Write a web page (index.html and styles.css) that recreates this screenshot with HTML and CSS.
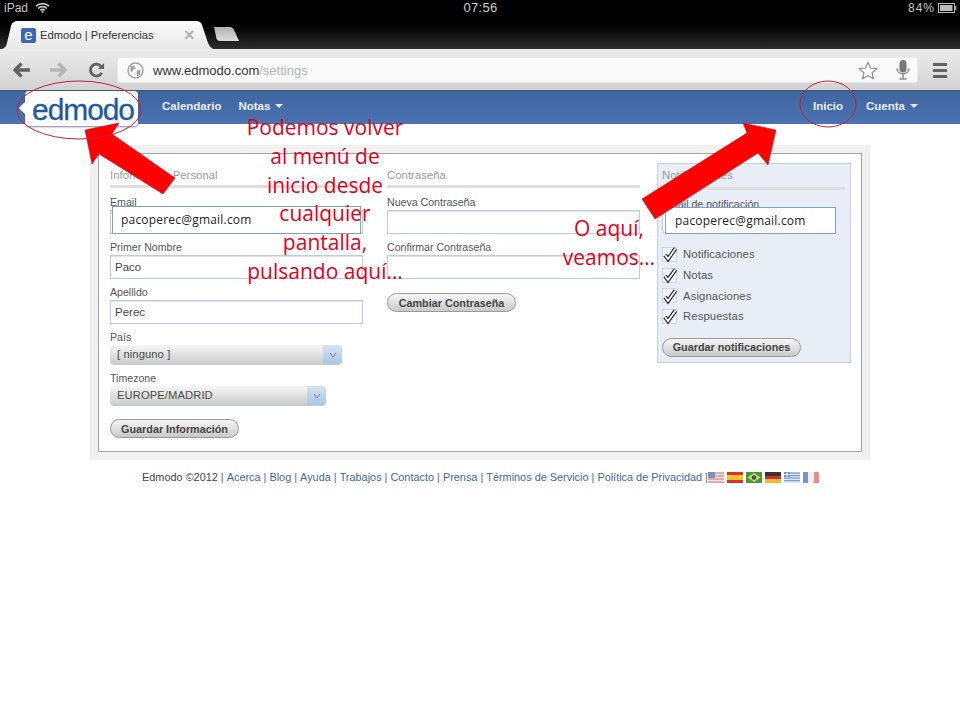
FILE: index.html
```html
<!DOCTYPE html>
<html lang="es">
<head>
<meta charset="utf-8">
<title>Edmodo | Preferencias</title>
<link rel="stylesheet" href="styles.css">
</head>
<body>
<div class="screen">
  <div class="status">
    <div class="status-left">
      <span>iPad</span>
      <svg class="wifi" width="15" height="11" viewBox="0 0 15 11"><path d="M1 4.200C4.600 .8 10.400 .8 14 4.200M3.200 6.300C5.600 4.100 9.400 4.100 11.800 6.300M5.300 8.300C6.500 7.200 8.500 7.200 9.700 8.300" fill="none" stroke="#ccc" stroke-width="1.600"/><path d="M7.500 8.700l1.500 1.400-1.500 .9-1.500-.9z" fill="#ccc"/></svg>
    </div>
    <div class="clock">07:56</div>
    <div class="status-right">
      <span>84%</span>
      <svg width="19" height="10" viewBox="0 0 19 10"><rect x=".5" y=".5" width="16" height="9" fill="none" stroke="#bbb"/><rect x="2" y="2" width="12.500" height="6" fill="#bbb"/><rect x="17" y="3" width="1.500" height="4" fill="#999"/></svg>
    </div>
  </div>

  <div class="tabstrip">
    <div class="tab">
      <svg class="tab-shape" width="214" height="28" viewBox="0 0 214 28"><defs><linearGradient id="tabfill" x1="0" y1="0" x2="0" y2="1"><stop offset="0" stop-color="#fbfbfb"/><stop offset="1" stop-color="#e8e8e8"/></linearGradient></defs><path d="M0 28C4 28 6 26 7 22L11 5C12 2 14 0 18 0H196C199 0 201 1 202 4L208 22C210 26 212 28 214 28Z" fill="url(#tabfill)"/></svg>
      <span class="favicon">e</span>
      <span class="tab-title">Edmodo | Preferencias</span>
      <span class="tab-close">×</span>
    </div>
    <svg class="newtab" width="28" height="15" viewBox="0 0 28 15"><defs><linearGradient id="newfill" x1="0" y1="0" x2="0" y2="1"><stop offset="0" stop-color="#b0b0b0"/><stop offset="1" stop-color="#dcdcdc"/></linearGradient></defs><path d="M2 0H18C20 0 21 1 22 3L27 14H8C6 14 5 13 4.500 11.500Z" fill="url(#newfill)"/></svg>
  </div>

  <div class="toolbar">
    <svg class="tool back" width="18" height="16" viewBox="0 0 18 16"><path d="M18 8H4M9.500 1.500L3 8L9.500 14.500" fill="none" stroke="#616161" stroke-width="3.400"/></svg>
    <svg class="tool fwd" width="18" height="16" viewBox="0 0 18 16"><path d="M0 8H14M8.500 1.500L15 8L8.500 14.500" fill="none" stroke="#b5b5b5" stroke-width="3.400"/></svg>
    <svg class="tool reload" width="17" height="17" viewBox="0 0 18 18"><path d="M14.500 11.500A6.300 6.300 0 1 1 13.800 4.600" fill="none" stroke="#616161" stroke-width="3"/><path d="M10.500 7.500H17V1Z" fill="#616161"/></svg>
    <div class="omnibox">
      <svg class="globe" width="17" height="17" viewBox="0 0 17 17"><circle cx="8.500" cy="8.500" r="7.500" fill="#fff" stroke="#a3a3a3" stroke-width="1.500"/><path d="M4 3.500l4 1 .5 2-2.500 1.500-1 3-2-3zM10 8l4 .5-1 4-2.500 2-1-3z" fill="#a3a3a3"/></svg>
      <span class="url"><span class="url-host">www.edmodo.com</span>/settings</span>
      <svg class="star" width="20" height="19" viewBox="0 0 20 19"><path d="M10 1.500l2.500 5.500 6 .7-4.400 4 1.200 5.900L10 14.700l-5.300 2.900 1.200-5.900-4.400-4 6-.7z" fill="#fff" stroke="#8f8f8f" stroke-width="1.200"/></svg>
      <svg class="mic" width="14" height="20" viewBox="0 0 14 20"><rect x="3.500" y="0" width="7" height="12.500" rx="3.500" fill="#777"/><path d="M1 8.500c0 7 12 7 12 0M7 14.500v3.500M3.500 19h7" fill="none" stroke="#888" stroke-width="1.500"/></svg>
    </div>
    <div class="menu-icon"><i></i><i></i><i></i></div>
  </div>

  <nav class="nav">
    <div class="logo"><span>edmodo</span></div>
    <a class="nav-link first">Calendario</a>
    <a class="nav-link">Notas<b class="caret"></b></a>
    <div class="nav-spacer"></div>
    <a class="nav-link">Inicio</a>
    <a class="nav-link last">Cuenta<b class="caret"></b></a>
  </nav>

  <main class="page">
    <div class="panel">
      <div class="card">
        <section class="col">
          <h2 class="heading">Información Personal</h2>
          <label class="label">Email</label>
          <div class="input"></div>
          <label class="label">Primer Nombre</label>
          <div class="input">Paco</div>
          <label class="label">Apellido</label>
          <div class="input">Perec</div>
          <label class="label">País</label>
          <div class="select pais">[ ninguno ]<span class="select-btn"><svg width="8" height="6" viewBox="0 0 8 6"><path d="M1 1l3 4 3-4" fill="none" stroke="#6d7f93"/></svg></span></div>
          <label class="label tz">Timezone</label>
          <div class="select zone">EUROPE/MADRID<span class="select-btn"><svg width="8" height="6" viewBox="0 0 8 6"><path d="M1 1l3 4 3-4" fill="none" stroke="#6d7f93"/></svg></span></div>
          <button class="btn save-info">Guardar Información</button>
        </section>
        <section class="col">
          <h2 class="heading">Contraseña</h2>
          <label class="label">Nueva Contraseña</label>
          <div class="input"></div>
          <label class="label">Confirmar Contraseña</label>
          <div class="input"></div>
          <button class="btn save-pass">Cambiar Contraseña</button>
        </section>
        <section class="notif">
          <h2 class="heading">Notificaciones</h2>
          <label class="label">Email de notificación</label>
          <div class="input notif-input"></div>
          <ul class="checks">
            <li><span class="box"><svg class="tick" width="16" height="16" viewBox="0 0 16 16"><path class="tick-out" d="M3 9l3 4L13.500 2.500"/><path class="tick-in" d="M3 9l3 4L13.500 2.500"/></svg></span>Notificaciones</li>
            <li><span class="box"><svg class="tick" width="16" height="16" viewBox="0 0 16 16"><path class="tick-out" d="M3 9l3 4L13.500 2.500"/><path class="tick-in" d="M3 9l3 4L13.500 2.500"/></svg></span>Notas</li>
            <li><span class="box"><svg class="tick" width="16" height="16" viewBox="0 0 16 16"><path class="tick-out" d="M3 9l3 4L13.500 2.500"/><path class="tick-in" d="M3 9l3 4L13.500 2.500"/></svg></span>Asignaciones</li>
            <li><span class="box"><svg class="tick" width="16" height="16" viewBox="0 0 16 16"><path class="tick-out" d="M3 9l3 4L13.500 2.500"/><path class="tick-in" d="M3 9l3 4L13.500 2.500"/></svg></span>Respuestas</li>
          </ul>
          <button class="btn save-notif">Guardar notificaciones</button>
        </section>
      </div>
    </div>
    <footer class="footer">
      <span class="copy">Edmodo ©2012</span><i>|</i><a>Acerca</a><i>|</i><a>Blog</a><i>|</i><a>Ayuda</a><i>|</i><a>Trabajos</a><i>|</i><a>Contacto</a><i>|</i><a>Prensa</a><i>|</i><a>Términos de Servicio</a><i>|</i><a>Política de Privacidad</a><i>|</i>
      <span class="flags">
        <svg width="16" height="11" viewBox="0 0 16 11"><rect width="16" height="11" fill="#e8a9ad"/><path d="M0 2.500h16M0 5.500h16M0 8.500h16" stroke="#f3eeee" stroke-width="1.200"/><rect width="7" height="6" fill="#7d8fc0"/></svg>
        <svg width="16" height="11" viewBox="0 0 16 11"><rect width="16" height="11" fill="#d8322a"/><rect y="3" width="16" height="5" fill="#f4c52e"/></svg>
        <svg width="16" height="11" viewBox="0 0 16 11"><rect width="16" height="11" fill="#3f9a45"/><path d="M8 1l6.500 4.500L8 10 1.500 5.500z" fill="#e6d43a"/><circle cx="8" cy="5.500" r="2.300" fill="#33508f"/></svg>
        <svg width="16" height="11" viewBox="0 0 16 11"><rect width="16" height="4" fill="#3b3330"/><rect y="4" width="16" height="3.500" fill="#c9352d"/><rect y="7.500" width="16" height="3.500" fill="#eebc33"/></svg>
        <svg width="16" height="11" viewBox="0 0 16 11"><rect width="16" height="11" fill="#dfe7f4"/><path d="M0 1.200h16M0 3.700h16M0 6.200h16M0 8.700h16" stroke="#7f9bd0" stroke-width="1.200"/><rect width="6" height="5" fill="#6f8fcb"/><path d="M3 0v5M0 2.500h6" stroke="#eef" stroke-width="1"/></svg>
        <svg width="16" height="11" viewBox="0 0 16 11"><rect width="16" height="11" fill="#f0eeee"/><rect width="5" height="11" fill="#7b95cc"/><rect x="11" width="5" height="11" fill="#e58f8c"/></svg>
      </span>
    </footer>
  </main>

  <div class="overlay-input email-over">pacoperec@gmail.com</div>
  <div class="overlay-input notif-over">pacoperec@gmail.com</div>

  <svg class="marks" width="960" height="720" viewBox="0 0 960 720">
    <polygon points="85,130 119,123 112,134 175,178 163,194 99,154 92,164" fill="#ff0000" stroke="#a8202c" stroke-width=".6"/>
    <polygon points="776,130 768,165 758,153 655,219 642,199 747,133 743,123" fill="#ff0000" stroke="#a8202c" stroke-width=".6"/>
    <ellipse cx="79" cy="110" rx="62" ry="29" fill="none" stroke="#c41e3a"/>
    <ellipse cx="828" cy="104" rx="28" ry="23" fill="none" stroke="#c41e3a"/>
  </svg>

  <div class="note note-left">Podemos volver<br>al menú de<br>inicio desde<br>cualquier<br>pantalla,<br>pulsando aquí…</div>
  <div class="note note-right">O aquí,<br>veamos…</div>
</div>
</body>
</html>
```
FILE: styles.css
```css
* { box-sizing: border-box; }
html, body { margin: 0; padding: 0; background: #fff; }
.screen {
  position: relative;
  width: 960px;
  height: 720px;
  overflow: hidden;
  font-family: "Liberation Sans", Arial, sans-serif;
  background: #fff;
}

/* iPad status bar */
.status {
  height: 15px;
  background: #000;
  color: #c8c8c8;
  font-size: 12px;
  display: flex;
  align-items: center;
  justify-content: space-between;
  padding: 0 3px 0 4px;
  position: relative;
}
.status-left { display: flex; align-items: center; gap: 7px; width: 200px; }
.clock { font-size: 13px; color: #d0d0d0; letter-spacing: .3px; }
.status-right { display: flex; align-items: center; justify-content: flex-end; gap: 3px; width: 200px; letter-spacing: 1px; }

/* browser chrome */
.tabstrip {
  height: 34px;
  background: linear-gradient(#000 0, #000 10px, #2e2e2e 100%);
  position: relative;
  display: flex;
  align-items: flex-end;
}
.tab {
  position: relative;
  width: 214px;
  height: 28px;
  display: flex;
  align-items: center;
  padding-left: 21px;
  font-size: 11.2px;
  color: #333;
}
.tab-shape { position: absolute; left: 0; top: 0; }
.favicon {
  position: relative;
  flex: none;
  width: 15px;
  height: 15px;
  background: #3a67b8;
  border-radius: 2px;
  color: #fff;
  font-size: 15px;
  line-height: 13px;
  text-align: center;
  margin-right: 4px;
}
.tab-title { position: relative; flex: none; width: 144px; white-space: nowrap; }
.tab-close { position: relative; font-size: 18px; color: #b5b5b5; line-height: 14px; font-weight: bold; }
.newtab { margin: 0 0 7px -2px; }
.toolbar {
  height: 41px;
  background: linear-gradient(#ebebeb, #d2d2d2);
  display: flex;
  align-items: center;
  padding: 1px 0 0 12px;
  position: relative;
}
.tool { flex: none; }
.back { margin-right: 20px; }
.fwd { margin-right: 20px; }
.reload { margin-right: 12px; }
.omnibox {
  flex: none;
  width: 801px;
  height: 26px;
  background: #fafafa;
  border-radius: 3px;
  border: 1px solid #e8e8e8;
  display: flex;
  align-items: center;
  padding: 0 7px 0 9px;
  font-size: 13px;
  color: #b3b3b3;
}
.globe { margin-right: 9px; }
.url { flex: 1; }
.url-host { color: #333; }
.star { margin-right: 18px; }
.menu-icon { margin-left: 15px; width: 14px; display: flex; flex-direction: column; gap: 3px; }
.menu-icon i { display: block; height: 3px; background: #616161; }

/* site navigation */
.nav {
  height: 34px;
  background: linear-gradient(#3f659f, #4a73b2);
  border-top: 1px solid #39598d;
  display: flex;
  align-items: center;
  padding: 0 0 4px 25px;
  color: #e8eef8;
  font-size: 11.500px;
  font-weight: bold;
}
.logo {
  align-self: flex-start;
  flex: none;
  width: 113px;
  height: 35px;
  background: #fff;
  border-radius: 4px;
  box-shadow: 0 1px 2px rgba(30,50,90,.6);
  position: relative;
  color: #1f5a9e;
  font-size: 30px;
  font-weight: normal;
  letter-spacing: -1.100px;
  -webkit-text-stroke: .3px #1f5a9e;
  text-align: center;
  line-height: 37px;
  padding-left: 3px;
}
.logo::before {
  content: "";
  position: absolute;
  left: -4px;
  top: 12px;
  width: 10px;
  height: 10px;
  background: #fff;
  transform: rotate(45deg);
}
.logo span { position: relative; }
.nav-link { margin-left: 17px; white-space: nowrap; }
.nav-link.first { margin-left: 24px; }
.nav-spacer { flex: 1; }
.nav-link.last { margin-left: 23px; margin-right: 42px; }
.caret {
  display: inline-block;
  margin-left: 5px;
  vertical-align: 2px;
  border-left: 4px solid transparent;
  border-right: 4px solid transparent;
  border-top: 4px solid #e8eef8;
}

/* settings card */
.page { padding: 21px 90px 0; }
.panel { background: #f1f1f1; padding: 8px; height: 315px; }
.card {
  height: 299px;
  background: #fff;
  border: 1px solid #9ea2b2;
  padding: 9px 11px 0;
  display: flex;
  align-items: flex-start;
  gap: 24px;
}
.col { width: 253px; flex: none; }
.col + .notif { margin-left: -7px; }
.notif {
  width: 194px;
  height: 200px;
  flex: none;
  background: #e9eef6;
  border: 1px solid #bfd2e4;
  padding: 0 5px 0 4px;
}
.heading {
  margin: 0;
  height: 25px;
  padding-top: 6px;
  font-size: 11.400px;
  line-height: 13px;
  font-weight: normal;
  color: #9b9b9b;
  border-bottom: 3px solid #dedede;
}
.label { display: block; font-size: 10.600px; line-height: 15px; color: #555; margin-top: 6px; height: 14px; }
.heading + .label { margin-top: 7px; }
.input {
  height: 24px;
  margin-top: 1px;
  border: 1px solid #b7cde0;
  background: #fff;
  box-shadow: inset 0 1px 1px #e3e3e3;
  font-size: 11.500px;
  color: #444;
  line-height: 23px;
  padding-left: 4px;
}
.select {
  height: 19px;
  margin-top: 1px;
  border-radius: 4px;
  background: linear-gradient(#f7f7f7, #cbcbcb);
  box-shadow: 0 1px 0 #c4ccd4;
  font-size: 11.200px;
  color: #4a4a4a;
  line-height: 19px;
  padding-left: 7px;
  position: relative;
  letter-spacing: .1px;
}
.pais { width: 232px; }
.zone { width: 216px; }
.select-btn {
  position: absolute;
  right: 0;
  top: 0;
  width: 19px;
  height: 19px;
  border-radius: 0 4px 4px 0;
  background: linear-gradient(#d5e4f3, #a9c6e2);
  display: flex;
  align-items: center;
  justify-content: center;
}
.tz { margin-top: 7px; }
.btn {
  display: block;
  height: 19px;
  border: 1px solid #9a9a9a;
  border-radius: 10px;
  background: linear-gradient(#f7f7f7, #c9c9c9);
  font-family: inherit;
  font-size: 10.800px;
  font-weight: bold;
  color: #444;
  padding: 0;
  text-align: center;
}
.save-info { width: 129px; margin-top: 14px; }
.save-pass { width: 129px; margin-top: 14px; }
.notif .heading { padding-top: 5px; height: 26px; }
.notif .label { margin-top: 7px; }
.notif-input { height: 24px; width: 165px; margin-top: -1px; border-radius: 4px; }
.checks { list-style: none; margin: 10px 0 0; padding: 0; }
.checks li {
  height: 20.700px;
  display: flex;
  align-items: center;
  font-size: 11.300px;
  color: #555;
  letter-spacing: .1px;
}
.box {
  width: 15px;
  height: 15px;
  background: #f0f3f8;
  border: 1px solid #cdd8e6;
  margin-right: 6px;
  display: flex;
  align-items: center;
  justify-content: center;
}
.tick { flex: none; margin: -2px; overflow: visible; }
.tick path { fill: none; }
.tick-out { stroke: #222; stroke-width: 4; }
.tick-in { stroke: #fff; stroke-width: 1.800; }
.save-notif { width: 139px; margin-top: 11px; }

/* footer */
.footer {
  margin-top: 10px;
  margin-left: 52px;
  display: flex;
  align-items: center;
  height: 14px;
  font-size: 10.900px;
  color: #444;
  white-space: nowrap;
}
.footer a { color: #3c6a9c; }
.footer i { font-style: normal; margin: 0 3px; color: #666; }
.flags { display: flex; gap: 3px; margin-left: -3px; }

/* slide annotations lying over the page */
.overlay-input {
  position: absolute;
  height: 28px;
  background: #fff;
  border: 1px solid #7ba0c9;
  font-family: "Open Sans", sans-serif;
  font-size: 12px;
  color: #222;
  line-height: 26px;
  letter-spacing: .2px;
}
.email-over { left: 112px; top: 206px; width: 249px; padding-left: 8px; }
.notif-over { left: 665px; top: 207px; width: 171px; height: 27px; padding-left: 9px; line-height: 25px; }
.marks { position: absolute; left: 0; top: 0; pointer-events: none; }
.note {
  position: absolute;
  font-family: "Open Sans", sans-serif;
  font-size: 21px;
  line-height: 28.800px;
  color: #e3001b;
  text-align: center;
  white-space: nowrap;
}
.note-left { left: 225px; top: 113px; width: 200px; }
.note-right { left: 544px; top: 214px; width: 130px; }
```
